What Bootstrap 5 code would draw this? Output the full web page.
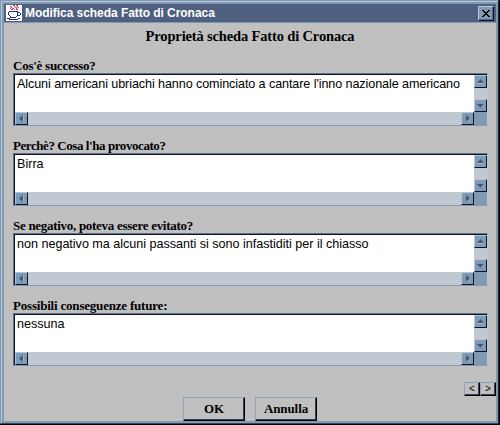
<!DOCTYPE html>
<html lang="it">
<head>
<meta charset="utf-8">
<meta name="viewport" content="width=device-width, initial-scale=1">
<title>Modifica scheda Fatto di Cronaca</title>
<link href="https://cdn.jsdelivr.net/npm/bootstrap@5.3.0/dist/css/bootstrap.min.css" rel="stylesheet">
<style>
:root{--face:#8199b1;--hi:#b3c8db;--navy:#0b1526;--gray:#c0c0c0}
body{width:500px;height:425px;background:#000;font-family:"Liberation Sans",Arial,sans-serif;color:#000}
.win{width:499px;height:424px;background:var(--gray);border:1px solid var(--face);border-right:1px solid #10203a;border-bottom:1px solid #304868}
.win-in{min-width:0;border:1px solid;border-color:var(--hi) var(--face) var(--face) var(--hi)}
.win-core{min-width:0;border:2px solid var(--face);border-width:2px 1px 1px 2px}
.titlebar{height:18px;background:#506080;color:#fff;font-size:12px;font-weight:700;line-height:18px;padding:0 2px}
.title-text{margin-left:3px;letter-spacing:-.05px;white-space:nowrap}
.close-btn{width:16px;height:15px;border:1px solid;border-color:var(--hi) var(--navy) var(--navy) var(--hi);background:var(--face);box-shadow:inset -1px -1px #506882}
.serif{font-family:"Liberation Serif","Times New Roman",serif;font-weight:700}
.dialog-body{border-top:1px solid var(--face)}
.heading{font-size:14.5px;line-height:18px;margin-top:4px;height:31px;letter-spacing:-.15px}
.field-block{height:80px;margin:0 8px 0 9px;font-size:13px}
.field-label{height:15px;line-height:15px;white-space:nowrap}
.field-block.first .field-label{letter-spacing:-.25px}
.field-block.second .field-label{letter-spacing:-.43px}
.field-block.third .field-label{letter-spacing:-.29px}
.field-block.fourth .field-label{letter-spacing:-.2px}
.pane{height:53px;border:1px solid;border-color:#62728a var(--hi) var(--face) #62728a;background:#fff}
.pane-in{min-width:0;border-left:1px solid var(--navy);border-top:1px solid var(--navy)}
.entry{font-size:12.6px;line-height:17px;padding:1px 0 0 2px;white-space:nowrap;min-width:0}
.first .entry{letter-spacing:-.095px}
.third .entry{letter-spacing:-.02px}
.vbar{width:13px;background:#c0c8d2}
.hbar{height:13px;background:#c0c8d2}
.corner{width:13px;background:var(--face)}
.arrow{width:13px;height:13px;border:1px solid;border-color:var(--hi) var(--navy) var(--navy) var(--hi);background:var(--face)}
.flat-btn{border:1px solid;border-color:#8ea4bb #000 #000 #8ea4bb;background:var(--gray);box-shadow:inset -1px -1px #334055;color:#000;border-radius:0}
.nav-row{margin-top:4px}
.nav-btn{width:16px;height:14px;font-size:10px;line-height:10px}
.actions{gap:10px;margin-top:1px}
.main-btn{width:62px;height:24px;font-size:13px;line-height:22px;letter-spacing:-.1px}
svg{display:block}
</style>
<script src="https://cdn.jsdelivr.net/npm/bootstrap@5.3.0/dist/js/bootstrap.bundle.min.js"></script>
</head>
<body class="m-0 overflow-hidden">
<svg width="0" height="0" class="position-absolute">
<symbol id="up" viewBox="0 0 11 11"><path d="M2 7h7L5.500 3z" fill="#3f5b7c"/><path d="M2 7.500h7" stroke="#a5bace"/></symbol>
<symbol id="down" viewBox="0 0 11 11"><path d="M2 4h7L5.500 8z" fill="#3f5b7c"/><path d="M9 4.500L6 8" stroke="#a5bace"/></symbol>
<symbol id="left" viewBox="0 0 11 11"><path d="M7 2v7L3 5.500z" fill="#3f5b7c"/><path d="M7.500 2v7" stroke="#a5bace"/></symbol>
<symbol id="right" viewBox="0 0 11 11"><path d="M4 2v7L8 5.500z" fill="#3f5b7c"/><path d="M4.500 9L8 6" stroke="#a5bace"/></symbol>
</svg>
<div class="win d-flex">
<div class="win-in d-flex flex-fill"><div class="win-core d-flex flex-column flex-fill">
<header class="titlebar d-flex align-items-center">
<svg width="16" height="16" viewBox="0 0 16 16" shape-rendering="crispEdges"><path fill="#fff" d="M0 0h16v16H0z"/><path d="M4 1.500h2M7 .500h2M10 .500h2M5 2.500h1M8 1.500h1M11 1.500h1M4 3.500h1M6 3.500h2M9 2.500h2M12 2.500h1M5 4.500h2M8 4.500h1M10 3.500h1M10 4.500h2" fill="none" stroke="#dc4050"/><path d="M3 6.500h9M2.500 7v3M3 10.500h1M4.500 11v2M5 12.500h5M10.500 11v1M11.500 7v4M12 7.500h2M14.500 8v2M12 10.500h2M1 13.500h3M3 14.500h9M12 13.500h2" fill="none" stroke="#282880"/></svg>
<span class="title-text">Modifica scheda Fatto di Cronaca</span>
<button class="close-btn p-0 ms-auto" aria-label="Chiudi"><svg width="14" height="13" viewBox="0 0 14 13" shape-rendering="crispEdges"><path d="M3 3h2v1h1v1h2V4h1V3h2v1h-1v1H9v1H8v1h1v1h1v1h1v1H9V9H8V8H6v1H5v1H3V9h1V8h1V7h1V6H5V5H4V4H3z" fill="#000"/></svg></button>
</header>
<main class="dialog-body d-flex flex-column flex-fill">
<h1 class="heading serif text-center mb-0">Proprietà scheda Fatto di Cronaca</h1>
<section class="field-block first"><div class="field-label serif">Cos'è successo?</div><div class="pane d-flex"><div class="pane-in d-flex flex-column flex-fill"><div class="d-flex flex-fill"><div class="entry flex-fill">Alcuni americani ubriachi hanno cominciato a cantare l'inno nazionale americano</div><div class="vbar d-flex flex-column justify-content-between"><div class="arrow"><svg width="11" height="11"><use href="#up"/></svg></div><div class="arrow"><svg width="11" height="11"><use href="#down"/></svg></div></div></div><div class="hbar d-flex"><div class="arrow"><svg width="11" height="11"><use href="#left"/></svg></div><div class="arrow ms-auto"><svg width="11" height="11"><use href="#right"/></svg></div><div class="corner"></div></div></div></div></section>
<section class="field-block second"><div class="field-label serif">Perchè? Cosa l'ha provocato?</div><div class="pane d-flex"><div class="pane-in d-flex flex-column flex-fill"><div class="d-flex flex-fill"><div class="entry flex-fill">Birra</div><div class="vbar d-flex flex-column justify-content-between"><div class="arrow"><svg width="11" height="11"><use href="#up"/></svg></div><div class="arrow"><svg width="11" height="11"><use href="#down"/></svg></div></div></div><div class="hbar d-flex"><div class="arrow"><svg width="11" height="11"><use href="#left"/></svg></div><div class="arrow ms-auto"><svg width="11" height="11"><use href="#right"/></svg></div><div class="corner"></div></div></div></div></section>
<section class="field-block third"><div class="field-label serif">Se negativo, poteva essere evitato?</div><div class="pane d-flex"><div class="pane-in d-flex flex-column flex-fill"><div class="d-flex flex-fill"><div class="entry flex-fill">non negativo ma alcuni passanti si sono infastiditi per il chiasso</div><div class="vbar d-flex flex-column justify-content-between"><div class="arrow"><svg width="11" height="11"><use href="#up"/></svg></div><div class="arrow"><svg width="11" height="11"><use href="#down"/></svg></div></div></div><div class="hbar d-flex"><div class="arrow"><svg width="11" height="11"><use href="#left"/></svg></div><div class="arrow ms-auto"><svg width="11" height="11"><use href="#right"/></svg></div><div class="corner"></div></div></div></div></section>
<section class="field-block fourth"><div class="field-label serif">Possibili conseguenze future:</div><div class="pane d-flex"><div class="pane-in d-flex flex-column flex-fill"><div class="d-flex flex-fill"><div class="entry flex-fill">nessuna</div><div class="vbar d-flex flex-column justify-content-between"><div class="arrow"><svg width="11" height="11"><use href="#up"/></svg></div><div class="arrow"><svg width="11" height="11"><use href="#down"/></svg></div></div></div><div class="hbar d-flex"><div class="arrow"><svg width="11" height="11"><use href="#left"/></svg></div><div class="arrow ms-auto"><svg width="11" height="11"><use href="#right"/></svg></div><div class="corner"></div></div></div></div></section>
<div class="nav-row d-flex justify-content-end"><button class="flat-btn nav-btn p-0">&lt;</button><button class="flat-btn nav-btn p-0">&gt;</button></div>
<div class="actions d-flex justify-content-center"><button class="flat-btn main-btn serif p-0">OK</button><button class="flat-btn main-btn serif p-0">Annulla</button></div>
</main>
</div></div>
</div>
</body>
</html>
